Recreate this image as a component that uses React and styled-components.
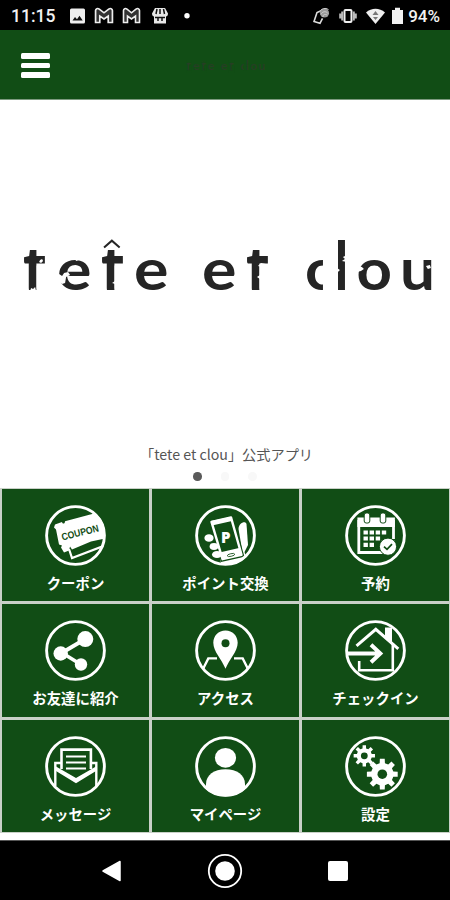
import React from 'react';
import styled, { createGlobalStyle } from 'styled-components';

const GREEN = '#114d15';

const GlobalStyle = createGlobalStyle`
  * {
    box-sizing: border-box;
  }
  body {
    margin: 0;
    background: #fff;
    font-family: 'Noto Sans CJK JP', 'Noto Sans', sans-serif;
  }
`;

const Screen = styled.div`
  width: 450px;
  height: 900px;
  display: flex;
  flex-direction: column;
  overflow: hidden;
  background: #fff;
`;

const StatusBar = styled.div`
  height: 30px;
  flex: none;
  display: flex;
  align-items: center;
  justify-content: space-between;
  padding: 1px 10px 0 11px;
  background: #000;
  color: #f2f2f2;
  font-family: Roboto, sans-serif;
`;

const StatusGroup = styled.div`
  display: flex;
  align-items: center;
`;

const StatusText = styled.span`
  font-size: ${({ $size }) => $size}px;
  font-weight: 500;
  line-height: 30px;
  white-space: nowrap;
`;

const Battery = styled(StatusText)`
  margin-left: 5px;
`;

const StatusIcon = styled.svg`
  display: block;
  flex: none;
  width: ${({ $width }) => $width}px;
  height: 18px;
  margin-left: ${({ $gap }) => $gap}px;
`;

const Header = styled.header`
  height: 70px;
  flex: none;
  display: grid;
  grid-template-columns: 71px 1fr 71px;
  align-items: center;
  justify-items: center;
  padding-top: 2px;
  background: ${GREEN};
  border-bottom: 1px solid #7d9a7f;
`;

const MenuButton = styled.button`
  display: flex;
  flex-direction: column;
  gap: 4px;
  padding: 0;
  border: 0;
  background: none;
`;

const MenuBar = styled.span`
  width: 29px;
  height: 5.6px;
  border-radius: 1.5px;
  background: #fff;
`;

const LogoSvg = styled.svg`
  display: block;
  overflow: visible;
  width: ${({ $width }) => $width}px;
  height: ${({ $width }) => $width * 0.14}px;
  color: ${({ $color }) => $color};
  font-family: Lato, sans-serif;
  font-weight: 700;
`;

const Slide = styled.section`
  height: 388px;
  flex: none;
  display: flex;
  flex-direction: column;
  align-items: center;
`;

const SlideImage = styled.div`
  height: 340px;
  padding-top: 136px;
  padding-left: 3px;
`;

const Caption = styled.p`
  margin: 0;
  padding-left: 3px;
  color: #555;
  font-size: 14.2px;
  line-height: 28px;
  white-space: nowrap;
`;

const Dots = styled.div`
  display: flex;
  gap: 19px;
  margin-top: 4px;
`;

const Dot = styled.span`
  width: 8.5px;
  height: 8.5px;
  border-radius: 50%;
  background: ${({ $active }) => ($active ? '#5a5a5a' : '#f8f8f8')};
`;

const Grid = styled.nav`
  flex: none;
  height: 345px;
  display: grid;
  grid-template-columns: repeat(3, 147px);
  grid-template-rows: repeat(3, 1fr);
  gap: 3.2px 3px;
  padding: 1px 1px 1px 2px;
  background: #c9d0c8;
`;

const Tile = styled.a`
  display: flex;
  flex-direction: column;
  align-items: center;
  padding-top: 16px;
  background: ${GREEN};
  color: #fff;
`;

const TileIcon = styled.svg`
  display: block;
  width: 61px;
  height: 61px;
`;

const TileLabel = styled.span`
  margin-top: 7px;
  font-size: 14.4px;
  font-weight: 700;
  line-height: 20px;
  white-space: nowrap;
`;

const NavBar = styled.footer`
  height: 60px;
  flex: none;
  margin-top: auto;
  display: grid;
  grid-template-columns: repeat(3, 113px);
  justify-content: center;
  justify-items: center;
  align-items: center;
  background: #000;
  border-top: 1px solid #555;
`;

const NavIcon = styled.svg`
  display: block;
  width: 36px;
  height: 36px;
`;

// Each letter is fitted into its own slot of the wordmark.
const LETTERS = [
  { char: 't', x: 22, width: 23 },
  { char: 'e', x: 56, width: 34.5 },
  { char: 't', x: 100, width: 23 },
  { char: 'e', x: 133, width: 34.5 },
  { char: 'e', x: 201, width: 34.5 },
  { char: 't', x: 245, width: 23 },
  { char: 'c', x: 304, width: 30 },
  { char: 'l', x: 333.5, width: 14 },
  { char: 'o', x: 355.5, width: 35.5 },
  { char: 'u', x: 399, width: 35 },
];

const Wordmark = ({ width, color, background }) => (
  <LogoSvg $width={width} $color={color} viewBox="20 236 412 57.7">
    {LETTERS.map(({ char, x, width: w }) => {
      const isT = char === 't';
      const scaleY = { t: 1.5, l: 1.18 }[char] || 1;
      return (
        <g key={x}>
          <text
            transform={`translate(${x} ${isT ? 300.5 : 290}) scale(1 ${scaleY})`}
            textLength={w}
            lengthAdjust="spacingAndGlyphs"
            fontSize="57"
            fill="currentColor"
          >
            {char}
          </text>
          {/* straight foot and square top for the t */}
          {isT && (
            <g fill={background}>
              <path d={`M${x - 2} 236h${w + 6}v14h-${w + 6}z`} />
              <path d={`M${x - 2} 290h${w + 6}v14h-${w + 6}z`} />
              <path d={`M${x + 13.5} 265.5h14v26h-14z`} />
            </g>
          )}
          {char === 'c' && <path d="M322 256h14v37h-14z" fill={background} />}
        </g>
      );
    })}
    <path d="M103 247.5l7.8-6.8 7.8 6.8" fill="none" stroke="currentColor" strokeWidth="2" />
    {/* worn spots */}
    <g fill={background}>
      <path d="M38 262l1-2 2-1 1 2-2 2zM29 291l1-3 2 1 2-2 1 4z" />
      <path d="M58 274l3 2 2-3 4-1 2 3-4 2-1 6-3 1-4-4zM73 257l2 4 3-1 1-3z" />
      <path d="M114 281l-3 2 3 1z" />
      <path d="M257 266l3-3 5 1-4 3zM259 275l-3 2 3 2z" />
      <path d="M346 255l-4 2 2 2-3 2 5 1zM336 268l3 2-3 3z" />
      <path d="M357 266l4 1 2 2-3 2-4 1zM425 266l2 3 3-1-1-3z" />
    </g>
  </LogoSvg>
);

const gearPath = (cx, cy, outer, inner, teeth) => {
  const step = (Math.PI * 2) / teeth;
  const points = [];
  for (let i = 0; i < teeth; i += 1) {
    [[-0.3, inner], [-0.2, outer], [0.2, outer], [0.3, inner]].forEach(([offset, r]) => {
      const a = (i + offset) * step - Math.PI / 2;
      points.push(`${(cx + r * Math.cos(a)).toFixed(2)} ${(cy + r * Math.sin(a)).toFixed(2)}`);
    });
  }
  return `M${points.join('L')}Z`;
};

const CouponIcon = () => (
  <>
    <path d="M24 44l3 9 34-13" fill="none" stroke="#fff" strokeWidth="2.2" />
    <path
      d="M10 19.5l7-2.5c.6 2.4 3 2 3-.8L49 8.5l11 7v18l-14 3-19 8-2-3-1 4-5 2-3-5 1-2-3-1-3-15-2-2z"
      fill="#fff"
    />
    <text
      transform="translate(17.5 35.5) rotate(-14)"
      textLength="38"
      lengthAdjust="spacingAndGlyphs"
      fontSize="10"
      fontWeight="700"
      fontFamily="Liberation Sans, sans-serif"
      fill={GREEN}
    >
      COUPON
    </text>
  </>
);

const PointIcon = () => (
  <>
    <path d="M25 49l23-5 4 9-10 6-16 0z" fill="#fff" />
    <path d="M43.5 24c0-6 7-9 8-5l1.5 21-5 10z" fill="#fff" />
    <path d="M16 16.5l20-4.3 11 38-19.5 4.5z" fill={GREEN} stroke={GREEN} strokeWidth="4" />
    <path d="M16.5 16.8l19.5-4.4 10.5 37.4-19 4.4z" fill="none" stroke="#fff" strokeWidth="2.4" strokeLinejoin="round" />
    <path d="M16 16l20-4 1 4-20 4.4zM25.6 47.2l19.5-4.4 2 7-19.3 5z" fill="#fff" />
    <ellipse cx="14" cy="33" rx="4.6" ry="3.8" fill="#fff" />
    <ellipse cx="19" cy="41.5" rx="4.4" ry="3.4" fill="#fff" />
    <ellipse cx="22" cy="49.5" rx="5" ry="3.6" fill="#fff" />
    <ellipse cx="36" cy="50" rx="3.8" ry="1.3" fill="none" stroke={GREEN} strokeWidth=".8" transform="rotate(-13 36 50)" />
    <text x="26" y="38" fontSize="15" fontWeight="800" fontFamily="Open Sans, sans-serif" fill="#fff">P</text>
  </>
);

const CalendarIcon = () => (
  <>
    <path d="M13.8 15v32.5H39M48.5 15v19" fill="none" stroke="#fff" strokeWidth="2.8" />
    <path d="M12.4 12.5h37.5v9.5H12.4z" fill="#fff" />
    <rect x="19.2" y="8" width="5.6" height="10" rx="2" fill="#fff" stroke={GREEN} strokeWidth="1" />
    <rect x="35.2" y="8" width="5.6" height="10" rx="2" fill="#fff" stroke={GREEN} strokeWidth="1" />
    <path
      d="M18.5 27.5h23.5M18.5 33.5h17.5M18.5 39.8h11.8"
      fill="none"
      stroke="#fff"
      strokeWidth="4.2"
      strokeDasharray="4.4 1.7"
    />
    <circle cx="43" cy="41.7" r="8.6" fill="#fff" stroke={GREEN} strokeWidth="1" />
    <path d="M39 41.6l3 2.8 5-5.2" fill="none" stroke={GREEN} strokeWidth="1.7" />
  </>
);

const ShareIcon = () => (
  <>
    <path d="M40.3 19.1L15.7 33.5" stroke="#fff" strokeWidth="4" />
    <path d="M18 33.5l18 11" stroke="#fff" strokeWidth="3.6" />
    <circle cx="40.3" cy="19.1" r="8" fill="#fff" />
    <circle cx="15.7" cy="33.5" r="7.2" fill="#fff" />
    <circle cx="36" cy="44.5" r="6.2" fill="#fff" />
  </>
);

const PinIcon = () => (
  <>
    <path d="M8 49l5.3-10.6H22M53 49l-5.3-10.6H39" fill="none" stroke="#fff" strokeWidth="2.4" />
    <path
      d="M30.5 10.5c-7 0-12.2 5.4-12.2 12.2 0 8.6 8.6 17 12.2 26 3.6-9 12.2-17.4 12.2-26 0-6.8-5.2-12.2-12.2-12.2z"
      fill="#fff"
    />
    <circle cx="30.5" cy="23.3" r="4" fill={GREEN} />
  </>
);

const CheckInIcon = () => (
  <>
    <path d="M40 7.5h7v17l-7-6z" fill="#fff" />
    <path d="M11.5 25.8L30.8 9.3l22.5 19.5" fill="none" stroke="#fff" strokeWidth="3" />
    <path d="M47.8 23v27.2H14.2V41" fill="none" stroke="#fff" strokeWidth="2.6" />
    <path d="M2 33.5h33M26 24.8l9.3 8.7-9.3 8.7" fill="none" stroke="#fff" strokeWidth="4" />
  </>
);

const MessageIcon = () => (
  <>
    <path d="M10.3 50V27h6M51.3 50V27h-6" fill="none" stroke="#fff" strokeWidth="2.4" />
    <path d="M16.5 33V13.6h29.4V33" fill="none" stroke="#fff" strokeWidth="2.6" />
    <path d="M21 20.5h20M21 26.5h20M21 32.5h20" stroke="#fff" strokeWidth="2" />
    <path d="M11 30.5l20 11.5 20-11.5v4.5L31 47.3 11 35z" fill="#fff" />
  </>
);

const PersonIcon = () => (
  <>
    <ellipse cx="30.5" cy="21.8" rx="10.6" ry="9.9" fill="#fff" />
    <path d="M11 61V48c0-9 8-14.8 19.5-14.8S50 39 50 48v13z" fill="#fff" />
  </>
);

const SettingsIcon = () => (
  <>
    <path d={gearPath(19.3, 19.8, 10.8, 7.6, 8)} fill="#fff" />
    <circle cx="19.3" cy="19.8" r="3.4" fill={GREEN} />
    <path d={gearPath(37.3, 38.2, 15.6, 11.3, 8)} fill="#fff" />
    <circle cx="37.3" cy="38.2" r="4.8" fill={GREEN} />
  </>
);

const TILES = [
  { label: 'クーポン', Icon: CouponIcon },
  { label: 'ポイント交換', Icon: PointIcon },
  { label: '予約', Icon: CalendarIcon },
  { label: 'お友達に紹介', Icon: ShareIcon },
  { label: 'アクセス', Icon: PinIcon },
  { label: 'チェックイン', Icon: CheckInIcon },
  { label: 'メッセージ', Icon: MessageIcon },
  { label: 'マイページ', Icon: PersonIcon },
  { label: '設定', Icon: SettingsIcon },
];

const MailIcon = ({ gap, width }) => (
  <StatusIcon $width={width} $gap={gap} viewBox="0 0 19 18" preserveAspectRatio="none">
    <path
      d="M1.5 3.5c0-2 2-2.5 3.5-1.3l4.5 3.6L14 2.2c1.5-1.2 3.5-.7 3.5 1.3v12h-4V9l-4 3-4-3v6.5h-4z"
      fill="#333"
      stroke="#eee"
      strokeWidth="1.6"
    />
  </StatusIcon>
);

const App = () => (
  <Screen>
    <GlobalStyle />
    <StatusBar>
      <StatusGroup>
        <StatusText $size={17.5}>11:15</StatusText>
        <StatusIcon $width={15} $gap={15} viewBox="0 0 15 18">
          <rect y="1.5" width="15" height="15" rx="1.5" fill="#eee" />
          <path d="M2.5 13.5l2.5-3.5 2 2.2 2.5-3.5 3.2 4.8z" fill="#111" />
        </StatusIcon>
        <MailIcon gap={9} width={20} />
        <MailIcon gap={8} width={19} />
        <StatusIcon $width={18} $gap={10} viewBox="0 0 18 18">
          <path d="M4 1h10l3 5.5c0 2-1 3-2 3v7H3v-7c-1 0-2-1-2-3z" fill="#e8e8e8" />
          <path d="M6 2L5 7M9 2v5M12.5 2l1 5M4 10.5h10M7 11v3M11 11v3" stroke="#111" strokeWidth="1.5" />
        </StatusIcon>
        <StatusIcon $width={6} $gap={15} viewBox="0 0 6 18">
          <circle cx="3" cy="8.7" r="2.7" fill="#fff" />
        </StatusIcon>
      </StatusGroup>
      <StatusGroup>
        <StatusIcon $width={17} $gap={0} viewBox="0 0 17 18">
          <path d="M7.5 4L4 5.5l-3 9 6 1.8 2.5-5" fill="none" stroke="#ddd" strokeWidth="1.6" />
          <circle cx="11.5" cy="6" r="4.6" fill="#999" />
          <path d="M6.5 5a6 6 0 0 1 9-2.5M8 7.5c1-3 5-4 7-1M10 10c0-3 2-3 4-2" fill="none" stroke="#ccc" strokeWidth="1" />
        </StatusIcon>
        <StatusIcon $width={18} $gap={9} viewBox="0 0 18 18">
          <rect x="5.5" y="3" width="7" height="12" rx="1" fill="none" stroke="#eee" strokeWidth="2" />
          <path d="M3.2 4.5v9M14.8 4.5v9M1.2 6.5v5M16.8 6.5v5" stroke="#bbb" strokeWidth="2" />
        </StatusIcon>
        <StatusIcon $width={19} $gap={9} viewBox="0 0 19 18">
          <path d="M0 5.5C5.5.5 13.5.5 19 5.5L9.5 17z" fill="#eee" />
          <path d="M6.5 8l3-4 3 4zM7 10h5l-2.5 3z" fill="#777" />
        </StatusIcon>
        <StatusIcon $width={11} $gap={7} viewBox="0 0 11 18">
          <path d="M0 3h3V.8h5V3h3v14H0z" fill="#f2f2f2" />
        </StatusIcon>
        <Battery $size={17}>94%</Battery>
      </StatusGroup>
    </StatusBar>
    <Header>
      <MenuButton aria-label="menu">
        <MenuBar />
        <MenuBar />
        <MenuBar />
      </MenuButton>
      <Wordmark width={79} color="#263e24" background={GREEN} />
    </Header>
    <Slide>
      <SlideImage>
        <Wordmark width={412} color="#252525" background="#fff" />
      </SlideImage>
      <Caption>「tete et clou」公式アプリ</Caption>
      <Dots>
        <Dot $active />
        <Dot />
        <Dot />
      </Dots>
    </Slide>
    <Grid>
      {TILES.map(({ label, Icon }, index) => (
        <Tile key={label}>
          <TileIcon viewBox="0 0 61 61">
            <clipPath id={`tile-${index}`}>
              <circle cx="30.5" cy="30.5" r="30" />
            </clipPath>
            <g clipPath={`url(#tile-${index})`}>
              <Icon />
            </g>
            <circle cx="30.5" cy="30.5" r="28.9" fill="none" stroke="#fff" strokeWidth="2.9" />
          </TileIcon>
          <TileLabel>{label}</TileLabel>
        </Tile>
      ))}
    </Grid>
    <NavBar>
      <NavIcon viewBox="0 0 36 36">
        <path d="M9 18L26 8.5v19z" fill="#fff" stroke="#fff" strokeWidth="1.5" strokeLinejoin="round" />
      </NavIcon>
      <NavIcon viewBox="0 0 36 36">
        <circle cx="18" cy="18" r="16.2" fill="none" stroke="#fff" strokeWidth="1.8" />
        <circle cx="18" cy="18" r="9.8" fill="#fff" />
      </NavIcon>
      <NavIcon viewBox="0 0 36 36">
        <rect x="8" y="8" width="20" height="20" rx="2" fill="#fff" />
      </NavIcon>
    </NavBar>
  </Screen>
);

export default App;
